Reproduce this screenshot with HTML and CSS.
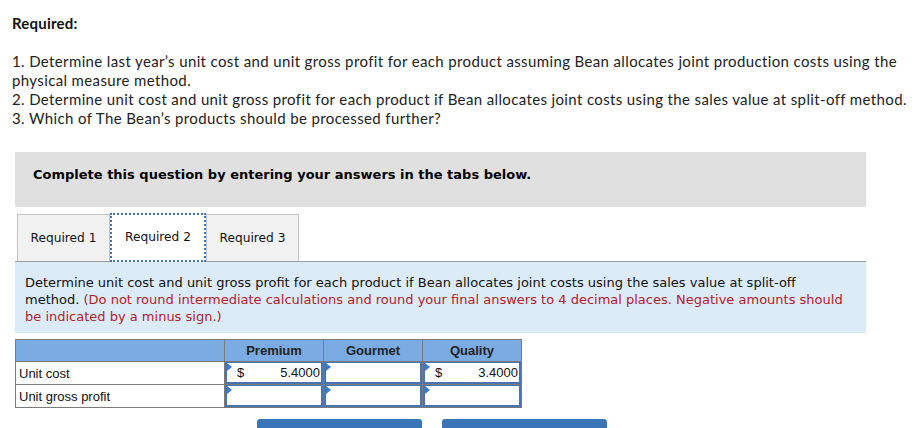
FILE: index.html
```html
<!DOCTYPE html>
<html>
<head>
<meta charset="utf-8">
<link rel="stylesheet" href="styles.css">
</head>
<body>
<div class="page">
  <p class="req-title">Required:</p>
  <div class="req-list">
    <p>1. Determine last year’s unit cost and unit gross profit for each product assuming Bean allocates joint production costs using the physical measure method.</p>
    <p>2. Determine unit cost and unit gross profit for each product if Bean allocates joint costs using the sales value at split-off method.</p>
    <p>3. Which of The Bean’s products should be processed further?</p>
  </div>

  <div class="complete-box">Complete this question by entering your answers in the tabs below.</div>

  <div class="tabs">
    <div class="tab">Required 1</div>
    <div class="tab active">Required 2</div>
    <div class="tab">Required 3</div>
  </div>

  <div class="info">Determine unit cost and unit gross profit for each product if Bean allocates joint costs using the sales value at split-off method. <span class="red">(Do not round intermediate calculations and round your final answers to 4 decimal places. Negative amounts should be indicated by a minus sign.)</span></div>

  <table class="grid">
    <tr class="head">
      <th class="label"></th>
      <th>Premium</th>
      <th>Gourmet</th>
      <th>Quality</th>
    </tr>
    <tr>
      <td class="label">Unit cost</td>
      <td class="in"><div class="box"><span class="cur">$</span><span class="val">5.4000</span></div></td>
      <td class="in"><div class="box"></div></td>
      <td class="in"><div class="box"><span class="cur">$</span><span class="val">3.4000</span></div></td>
    </tr>
    <tr>
      <td class="label">Unit gross profit</td>
      <td class="in"><div class="box"></div></td>
      <td class="in"><div class="box"></div></td>
      <td class="in"><div class="box"></div></td>
    </tr>
  </table>

  <div class="buttons">
    <div class="btn"></div>
    <div class="btn"></div>
  </div>
</div>
</body>
</html>
```
FILE: styles.css
```css
html, body {
  margin: 0;
  padding: 0;
  background: #fff;
  overflow: hidden;
}
.page {
  width: 923px;
  height: 428px;
  position: relative;
  color: #222;
}
.req-title {
  margin: 0;
  padding: 14px 0 0 12px;
  font-family: "Lato", "Open Sans", sans-serif;
  font-weight: bold;
  font-size: 15px;
  line-height: 18px;
  color: #111;
  letter-spacing: 0.2px;
}
.req-list {
  margin-top: 20px;
  padding-left: 12px;
  width: 900px;
  font-family: "Lato", "Open Sans", sans-serif;
  font-size: 15px;
  line-height: 19px;
  letter-spacing: 0.37px;
  color: #222;
}
.req-list p {
  margin: 0;
}
.complete-box {
  margin: 24px 0 0 15px;
  width: 851px;
  height: 55px;
  box-sizing: border-box;
  background: #e0e0e0;
  padding: 15px 0 0 18px;
  font-family: "DejaVu Sans", Verdana, sans-serif;
  font-weight: bold;
  font-size: 13px;
  color: #000;
}
.tabs {
  display: flex;
  margin: 7px 0 0 15px;
  width: 849px;
  height: 47px;
  border-bottom: 1px solid #999;
  padding-left: 2px;
  box-sizing: content-box;
}
.tab {
  box-sizing: border-box;
  height: 47px;
  padding: 16px 0 0 0;
  text-align: center;
  width: 93px;
  background: #f2f2f2;
  border: 1px solid #c4c4c4;
  border-bottom: none;
  font-family: "DejaVu Sans", Verdana, sans-serif;
  font-size: 12.2px;
  color: #111;
}
.tab.active {
  background: #fff;
  width: 96px;
  height: 49px;
  margin-top: -1px;
  border: 2px dotted #3a72c0;
  padding-top: 15px;
  position: relative;
  z-index: 1;
}
.info {
  margin-left: 15px;
  width: 851px;
  height: 71px;
  box-sizing: border-box;
  background: #dcebf8;
  padding: 12px 16px 0 10px;
  font-family: "DejaVu Sans", Verdana, sans-serif;
  font-size: 13px;
  line-height: 17px;
  color: #111;
}
.red {
  color: #b4202a;
}
.grid {
  margin: 6px 0 0 15px;
  border-collapse: collapse;
  font-family: "Liberation Sans", Arial, sans-serif;
  font-size: 13px;
  color: #111;
}
.grid th, .grid td {
  border: 1px solid #7a7a7a;
  padding: 0;
  width: 98px;
}
.grid .head th {
  background: #7aabe2;
  height: 21px;
  font-weight: bold;
  color: #222;
}
.grid .label {
  width: 205px;
  text-align: left;
  padding-left: 3px;
  height: 22px;
}
.grid .head .label {
  padding: 0;
}
.grid td.in {
  padding: 0;
}
.box {
  position: relative;
  height: 19px;
  margin: 0;
  border: 2px solid #4a74b0;
  border-width: 1px 2px 2px 2px;
  background: #fff;
  display: flex;
  justify-content: space-between;
  align-items: center;
  padding: 0 1px 0 10px;
}
.box::before {
  content: "";
  position: absolute;
  left: 0;
  top: 0;
  border-left: 5px solid #3a7bd0;
  border-top: 4px solid transparent;
  border-bottom: 4px solid transparent;
}
.cur, .val {
  font-family: "Liberation Sans", Arial, sans-serif;
  font-size: 13px;
}
.buttons {
  display: flex;
  gap: 20px;
  margin: 11px 0 0 257px;
}
.btn {
  width: 165px;
  height: 20px;
  background: #3a75b8;
  border-radius: 3px 3px 0 0;
}
```
